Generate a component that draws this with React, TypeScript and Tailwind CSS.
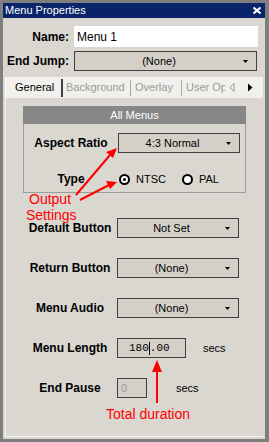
import React from 'react';

const DownArrow = () => (
  <svg width="5" height="3" viewBox="0 0 5 3">
    <path d="M0 0h5L2.5 3z" fill="#000" />
  </svg>
);

const Dropdown = ({ value, className }: { value: string; className: string }) => (
  <div className={`h-[20px] bg-[#d4d0c8] border border-[#404040] flex items-center text-[11px] text-black ${className}`}>
    <span className="flex-1 text-center leading-none">{value}</span>
    <span className="w-[13px] flex items-center">
      <DownArrow />
    </span>
  </div>
);

const Radio = ({ checked, label }: { checked?: boolean; label: string }) => (
  <div className="flex items-center">
    <span className="w-[11px] h-[11px] rounded-full border-2 border-black bg-white flex items-center justify-center">
      {checked && <span className="w-[3px] h-[3px] rounded-full bg-black" />}
    </span>
    <span className="ml-[6px] text-[11px] leading-none">{label}</span>
  </div>
);

const Row = ({ label, children }: { label: string; children: React.ReactNode }) => (
  <div className="flex items-center h-[20px]">
    <div className="w-[94px] text-center text-[12px] font-bold leading-none">{label}</div>
    {children}
  </div>
);

export default function App() {
  return (
    <div className="w-[269px] h-[442px] bg-[#7f7f7f] pt-[3px] pl-[3px] pr-[4px] pb-[3px] flex flex-col font-['Liberation_Sans',Arial,sans-serif] relative overflow-hidden">
      {/* title bar */}
      <div className="h-[15px] bg-[#0a246a] text-white flex items-center justify-between pl-[2px] pr-[4px]">
        <span className="text-[11px] leading-none">Menu Properties</span>
        <svg width="8" height="7" viewBox="0 0 8 7">
          <path d="M0.5 0.5L7.5 6.5M7.5 0.5L0.5 6.5" stroke="#fff" strokeWidth="2" />
        </svg>
      </div>

      {/* body */}
      <div className="flex-1 bg-[#dad7d1] flex flex-col text-black">
        <div className="mt-[8px] h-[21px] flex items-center">
          <div className="w-[66px] text-right text-[12px] font-bold leading-none">Name:</div>
          <div className="ml-[5px] w-[184px] h-[21px] bg-white flex items-center pl-[3px] text-[12px]">Menu 1</div>
        </div>
        <div className="mt-[4px] h-[20px] flex items-center">
          <div className="w-[66px] text-right text-[12px] font-bold leading-none">End Jump:</div>
          <Dropdown value="(None)" className="ml-[5px] w-[183px]" />
        </div>

        {/* tabs */}
        <div className="mt-[6px] mx-[2px] h-[21px] bg-[#f1f0ec] border-l border-white flex items-center text-[11px]">
          <div className="w-[55px] h-full flex items-center pl-[9px]">General</div>
          <div className="w-[2px] h-[18px] bg-[#404040]" />
          <div className="w-[67px] flex items-center pl-[3px] text-[#9a9a9a]">Background</div>
          <div className="w-px h-[16px] bg-[#a8a8a8]" />
          <div className="w-[50px] flex items-center pl-[4px] text-[#9a9a9a]">Overlay</div>
          <div className="w-px h-[16px] bg-[#a8a8a8]" />
          <div className="w-[43px] overflow-hidden whitespace-nowrap pl-[4px] text-[#9a9a9a]">User Options</div>
          <svg width="6" height="9" viewBox="0 0 6 9" className="ml-[4px]">
            <path d="M5 0.5L0.8 4.5L5 8.5z" fill="none" stroke="#9a9a9a" strokeWidth="1" />
          </svg>
          <svg width="5" height="9" viewBox="0 0 5 9" className="ml-[13px]">
            <path d="M0 0.5L4.5 4.5L0 8.5z" fill="#000" />
          </svg>
        </div>

        {/* panel */}
        <div className="flex-1 mb-[2px] mx-[2px] border-l border-b border-[#f4f4f4] pl-[17px] flex flex-col">
          <div className="mt-[8px] w-[223px] h-[87px] border border-[#9c9c9c] border-t-0 flex flex-col">
            <div className="h-[18px] -mx-px bg-[#878787] text-white text-[11px] flex items-center justify-center">All Menus</div>
            <div className="mt-[9px]">
              <Row label="Aspect Ratio">
                <Dropdown value="4:3 Normal" className="w-[122px]" />
              </Row>
            </div>
            <div className="mt-[16px]">
              <Row label="Type">
                <div className="flex items-center gap-[16px] pl-[1px]">
                  <Radio checked label="NTSC" />
                  <Radio label="PAL" />
                </div>
              </Row>
            </div>
          </div>

          <div className="mt-[25px]">
            <Row label="Default Button">
              <Dropdown value="Not Set" className="w-[122px]" />
            </Row>
          </div>
          <div className="mt-[20px]">
            <Row label="Return Button">
              <Dropdown value="(None)" className="w-[122px]" />
            </Row>
          </div>
          <div className="mt-[20px]">
            <Row label="Menu Audio">
              <Dropdown value="(None)" className="w-[122px]" />
            </Row>
          </div>
          <div className="mt-[20px]">
            <Row label="Menu Length">
              <div className="w-[69px] h-[20px] border border-[#404040] bg-[#d4d0c8] flex items-center pl-[11px] font-['Liberation_Mono',monospace] text-[11px]">
                <span>180</span>
                <span className="w-px h-[13px] bg-black" />
                <span>.00</span>
              </div>
              <span className="ml-[17px] text-[11px]">secs</span>
            </Row>
          </div>
          <div className="mt-[20px]">
            <Row label="End Pause">
              <div className="w-[30px] h-[20px] border border-[#404040] bg-[#d4d0c8] flex items-center pl-[3px] text-[11px] text-[#9a9a9a]">0</div>
              <span className="ml-[29px] text-[11px]">secs</span>
            </Row>
          </div>
        </div>
      </div>

      {/* red annotations */}
      <svg className="absolute inset-0 pointer-events-none" width="269" height="442" viewBox="0 0 269 442">
        <g stroke="#ff0000" strokeWidth="2" fill="#ff0000">
          <line x1="76" y1="195" x2="110" y2="155" />
          <path d="M117 148L106 152L113 158z" stroke="none" />
          <line x1="80" y1="200" x2="109" y2="185" />
          <path d="M117 182L106 181L110 189z" stroke="none" />
          <line x1="157" y1="370" x2="157" y2="403" />
          <path d="M157 360L152 372L162 372z" stroke="none" />
        </g>
      </svg>
      <div className="absolute left-[29px] top-[192px] text-[14px] leading-none text-[#ff0000]">Output</div>
      <div className="absolute left-[26px] top-[208px] text-[14px] leading-none text-[#ff0000]">Settings</div>
      <div className="absolute left-[106px] top-[407px] text-[14px] leading-none text-[#ff0000]">Total duration</div>
    </div>
  );
}
